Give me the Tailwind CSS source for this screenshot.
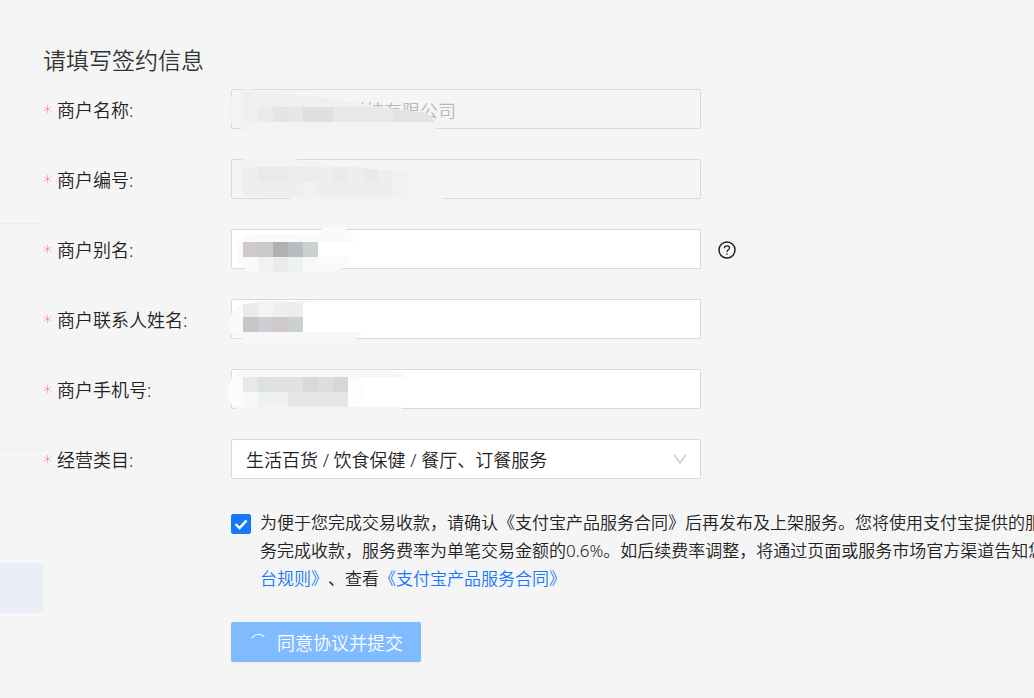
<!DOCTYPE html>
<html lang="zh-CN">
<head>
  <meta charset="UTF-8">
  <meta name="viewport" content="width=device-width,initial-scale=1">
  <title>填写签约信息</title>
  <script src="https://cdn.jsdelivr.net/npm/@tailwindcss/browser@4"></script>
</head>
<body class="flex min-h-screen overflow-hidden bg-[#f5f5f5] font-['Noto_Sans','Noto_Sans_CJK_SC',sans-serif] text-lg font-[350] text-[#222] [text-spacing-trim:space-all]">
  <!-- 左侧菜单边缘 -->
  <aside class="w-[43px] shrink-0 pt-[223px]">
    <hr class="border-[#ebebeb]">
    <hr class="mt-[225px] border-[#ebebeb]">
    <div class="mt-[113px] h-[50px] rounded-r bg-[#e9eef7]"></div>
  </aside>

  <main class="min-w-0 flex-1 overflow-hidden pt-11">
    <h1 class="mb-3 text-[23px] leading-[33px] text-[#333]">请填写签约信息</h1>

    <form>
      <div class="mb-[30px] flex items-center">
        <label for="name" class="flex w-[188px] items-center pt-[2px]"><span class="mr-1 w-[10px] pt-1 font-['DejaVu_Sans'] text-[#ff4d4f]">*</span>商户名称<span>:</span></label>
        <div class="relative w-[470px]">
          <input id="name" type="text" value="科技有限公司" disabled class="block h-10 w-full rounded-xs border border-[#d9d9d9] bg-[#f5f5f5] pt-[2px] pr-3 pl-[116px] text-[#b8b8b8]">
          <svg class="absolute -top-[9px] -left-[11px] h-[65px] w-[260px]" viewBox="0 0 780 195" aria-hidden="true">
            <path d="M24 85Q26 50 50 38L70 28L94 28L150 36L300 50L410 70L500 84L600 96Q646 102 649 145L649 170L300 172Q180 168 100 155L60 145Q26 140 24 85Z" fill="#f3f3f3"/>
            <path d="M69 36L150 38L300 52L410 70L500 84L600 96Q632 100 645 126H69Z" fill="#efefef"/>
            <path d="M114 81H159V126H114Z" fill="#eaeaea"/><path d="M159 81H204V126H159Z" fill="#e4e4e4"/>
            <path d="M204 81H249V126H204Z" fill="#e7e7e7"/><path d="M249 81H339V126H249Z" fill="#dfdfdf"/>
            <path d="M339 81H480L519 87V126H339Z" fill="#e8e8e8"/><path d="M519 87L600 96Q632 100 645 126H519Z" fill="#e2e3e3"/>
          </svg>
        </div>
      </div>

      <div class="mb-[30px] flex items-center">
        <label for="no" class="flex w-[188px] items-center pt-[2px]"><span class="mr-1 w-[10px] pt-1 font-['DejaVu_Sans'] text-[#ff4d4f]">*</span>商户编号<span>:</span></label>
        <div class="relative w-[470px]">
          <input id="no" type="text" disabled class="block h-10 w-full rounded-xs border border-[#d9d9d9] bg-[#f5f5f5] px-3">
          <svg class="absolute -top-[9px] -left-[11px] h-[65px] w-[260px]" viewBox="0 0 780 195" aria-hidden="true">
            <path d="M42 80Q45 40 70 25L110 20H180L240 30L400 50L565 62V140H675Q650 180 620 180H460Q300 160 200 144L80 136Q42 120 42 80Z" fill="#f3f3f3"/>
            <path d="M69 51H410L460 58L519 60V140H90L69 132Z" fill="#eeeeee"/>
            <path d="M519 60H565V140H519Z" fill="#f1f1f1"/><path d="M114 51H204V96H114Z" fill="#e9eaea"/>
            <path d="M204 51H294V96H204Z" fill="#ececec"/><path d="M339 51H384V96H339Z" fill="#e9eaea"/>
            <path d="M429 54L474 59V96H429Z" fill="#e9ebeb"/><path d="M249 96H294V140H249Z" fill="#f1f1f1"/>
          </svg>
        </div>
      </div>

      <div class="mb-[30px] flex items-center">
        <label for="alias" class="flex w-[188px] items-center pt-[2px]"><span class="mr-1 w-[10px] pt-1 font-['DejaVu_Sans'] text-[#ff4d4f]">*</span>商户别名<span>:</span></label>
        <div class="relative w-[470px]">
          <input id="alias" type="text" class="block h-10 w-full rounded-xs border border-[#d9d9d9] bg-white px-3">
          <svg class="pointer-events-none absolute -top-[9px] -left-[11px] h-[60px] w-[200px]" viewBox="0 0 600 180" aria-hidden="true">
            <path d="M50 98Q54 50 104 42H180L294 44Q306 22 318 21H366Q395 32 402 66H294V111H394Q370 156 324 156H110Q52 150 50 98Z" fill="#fafafa"/>
            <path d="M69 66H114V111H69Z" fill="#cfcaca"/><path d="M114 66H159V111H114Z" fill="#c9caca"/>
            <path d="M159 66H204V111H159Z" fill="#b2b1b1"/><path d="M204 66H249V111H204Z" fill="#b8bdbf"/>
            <path d="M249 66H294V111H249Z" fill="#cbd0d1"/><path d="M114 111H159V156H114Z" fill="#f1f1ef"/>
            <path d="M159 111H204V156H159Z" fill="#ebebeb"/><path d="M204 111H249V156H204Z" fill="#eef1f1"/>
            <path d="M249 111H294V156H249Z" fill="#f8f8f8"/>
          </svg>
        </div>
        <button type="button" aria-label="帮助" class="ml-[17px] pt-[2px]">
          <svg class="block size-[18px]" viewBox="0 0 18 18" fill="none" stroke="#222" stroke-width="1.5">
            <circle cx="9" cy="9" r="8"/>
            <path d="M6.4 7.3C6.4 5.6 7.5 4.8 9 4.8S11.6 5.7 11.6 7.1C11.6 8.7 9 8.9 9 10.9" stroke-width="1.3"/>
            <circle cx="9" cy="13" r="0.8" fill="#222" stroke="none"/>
          </svg>
        </button>
      </div>

      <div class="mb-[30px] flex items-center">
        <label for="contact" class="flex w-[188px] items-center pt-[2px]"><span class="mr-1 w-[10px] pt-1 font-['DejaVu_Sans'] text-[#ff4d4f]">*</span>商户联系人姓名<span>:</span></label>
        <div class="relative w-[470px]">
          <input id="contact" type="text" class="block h-10 w-full rounded-xs border border-[#d9d9d9] bg-white px-3">
          <svg class="pointer-events-none absolute -top-[9px] -left-[11px] h-[60px] w-[200px]" viewBox="0 0 600 180" aria-hidden="true">
            <path d="M25 95Q28 70 50 54Q70 40 130 34H384L249 38V126H428Q410 156 370 156H180L80 166L69 146L40 138Q24 126 25 95Z" fill="#f7f7f7"/>
            <path d="M26 95Q30 70 69 46V126H29Z" fill="#fafafa"/>
            <path d="M69 42L114 37V81H69Z" fill="#ebeae9"/><path d="M114 36H159V81H114Z" fill="#f1f3f5"/>
            <path d="M159 36H204V81H159Z" fill="#f0edee"/><path d="M204 36H249V81H204Z" fill="#ececec"/>
            <path d="M69 81H114V126H69Z" fill="#c9c5c4"/><path d="M114 81H159V126H114Z" fill="#cdcdd3"/>
            <path d="M159 81H204V126H159Z" fill="#cfc9c9"/><path d="M204 81H249V126H204Z" fill="#cbd0d0"/>
          </svg>
        </div>
      </div>

      <div class="mb-[30px] flex items-center">
        <label for="phone" class="flex w-[188px] items-center pt-[2px]"><span class="mr-1 w-[10px] pt-1 font-['DejaVu_Sans'] text-[#ff4d4f]">*</span>商户手机号<span>:</span></label>
        <div class="relative w-[470px]">
          <input id="phone" type="tel" class="block h-10 w-full rounded-xs border border-[#d9d9d9] bg-white px-3">
          <svg class="pointer-events-none absolute -top-[9px] -left-[11px] h-[60px] w-[200px]" viewBox="0 0 600 180" aria-hidden="true">
            <path d="M36 51Q50 32 80 32H500Q540 34 560 51Z" fill="#f7f7f7"/>
            <path d="M36 140H546V152H60Z" fill="#f4f4f4"/>
            <path d="M24 96Q24 60 40 51H69V140H42Q24 130 24 96Z" fill="#fbfbfb"/>
            <path d="M69 51H114V96H69Z" fill="#e8e8e5"/><path d="M114 51H159V96H114Z" fill="#dde2e1"/>
            <path d="M159 51H204V96H159Z" fill="#e2e2df"/><path d="M204 51H249V96H204Z" fill="#e2e2e2"/>
            <path d="M249 51H294V96H249Z" fill="#d9d9da"/><path d="M294 51H339V96H294Z" fill="#dfdcda"/>
            <path d="M339 51H384V96H339Z" fill="#d7d7d9"/><path d="M384 51H429V140H384Z" fill="#fbfdff"/>
            <path d="M69 96H114V140H69Z" fill="#f8f8f8"/><path d="M114 96H204V140H114Z" fill="#eff1f0"/>
            <path d="M204 96H384V140H204Z" fill="#e5e5e5"/>
          </svg>
        </div>
      </div>

      <div class="mb-[30px] flex items-center">
        <label for="category" class="flex w-[188px] items-center pt-[2px]"><span class="mr-1 w-[10px] pt-1 font-['DejaVu_Sans'] text-[#ff4d4f]">*</span>经营类目<span>:</span></label>
        <div class="relative w-[470px]">
          <select id="category" class="block h-10 w-full appearance-none rounded-xs border border-[#d9d9d9] bg-white px-[14px] pt-[2px]">
            <option>生活百货 / 饮食保健 / 餐厅、订餐服务</option>
          </select>
          <svg class="pointer-events-none absolute top-[15px] right-[14px] h-[10px] w-[14px]" viewBox="0 0 14 10" fill="none" stroke="#bfbfbf" stroke-width="1.2">
            <path d="M1 0.6L7 9L13 0.6"/>
          </svg>
        </div>
      </div>

      <!-- 协议确认 -->
      <div class="mb-[29px] ml-[188px] flex items-start">
        <div class="relative mt-[5px] size-5 shrink-0">
          <input id="agree" type="checkbox" checked class="block size-5 appearance-none rounded-xs border border-[#d9d9d9] bg-white checked:border-[#1677ff] checked:bg-[#1677ff]">
          <svg class="pointer-events-none absolute inset-0 size-5" viewBox="0 0 20 20" fill="none" stroke="#fff" stroke-width="2.4">
            <path d="M4.6 10.2L8.6 14L15.6 6.4"/>
          </svg>
        </div>
        <p class="ml-[9px] text-[17px] leading-7 whitespace-nowrap">
          <label for="agree">为便于您完成交易收款，请确认《支付宝产品服务合同》后再发布及上架服务。您将使用支付宝提供的服<br>务完成收款，服务费率为单笔交易金额的0.6%。如后续费率调整，将通过页面或服务市场官方渠道告知您。</label>查看<a href="#" class="text-[#1677ff]">《平<br>台规则》</a>、查看<a href="#" class="text-[#1677ff]">《支付宝产品服务合同》</a>
        </p>
      </div>

      <button type="submit" disabled class="ml-[188px] flex h-10 items-center rounded-xs bg-[#80baff] px-[18px] pt-[2px] text-white shadow-xs">
        <svg class="mr-[10px] size-[18px]" viewBox="0 0 18 18" fill="none" stroke="#fff" stroke-width="1.3" stroke-linecap="round" opacity="0.8">
          <path d="M2.8 3.8C6 -0.2 11.5 -0.6 15 2.4"/>
        </svg>
        同意协议并提交
      </button>
    </form>
  </main>
</body>
</html>
